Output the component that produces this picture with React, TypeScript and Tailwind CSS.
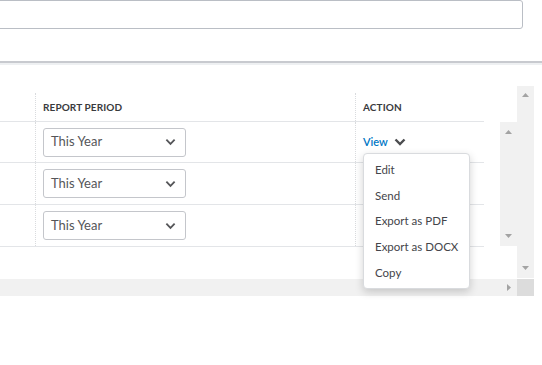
import React from "react";

const rows = ["This Year", "This Year", "This Year"];
const menuItems = ["Edit", "Send", "Export as PDF", "Export as DOCX", "Copy"];

const Chevron: React.FC<{ className?: string; sw?: number }> = ({ className, sw = 2 }) => (
  <svg viewBox="0 0 12 8" className={className} fill="none" stroke="currentColor" strokeWidth={sw}>
    <path d="M1.5 1.5 6 6l4.5-4.5" />
  </svg>
);

const Arrow: React.FC<{ dir: "up" | "down" | "right" }> = ({ dir }) => {
  const d =
    dir === "up" ? "M0 4 3.5 0 7 4Z" : dir === "down" ? "M0 0h7L3.5 4Z" : "M0 0v7l4-3.5Z";
  return (
    <svg width={dir === "right" ? 4 : 7} height={dir === "right" ? 7 : 4} viewBox={dir === "right" ? "0 0 4 7" : "0 0 7 4"}>
      <path d={d} fill="#a3a3a3" />
    </svg>
  );
};

const App: React.FC = () => {
  return (
    <div className="relative w-[542px] h-[365px] overflow-hidden bg-white font-['Lato','Open_Sans',sans-serif] text-[#393a3d]">
      {/* Search box */}
      <div className="ml-[-10px] h-[29px] w-[533px] rounded-[3px] border border-[#babec5]" />

      <div className="mt-[32px] h-[2px] bg-[#c8cacf]" />
      <div className="h-[2px] bg-[#eef0f2]" />

      <div className="flex">
        {/* Grid area */}
        <div className="w-[517px]">
          <div className="h-[28px]" />
          {/* Header */}
          <div className="flex h-[29px] w-[484px] border-b border-[#e3e5e8] text-[10px] font-bold tracking-[0.1px]">
            <div className="w-[36px] border-r border-dotted border-[#d9dbde]" />
            <div className="flex w-[320px] items-center border-r border-dotted border-[#d9dbde] pl-[7px]">REPORT PERIOD</div>
            <div className="flex items-center pl-[7px]">ACTION</div>
          </div>

          <div className="flex">
            <div className="w-[500px]">
              {rows.map((r, i) => (
                <div
                  key={i}
                  className={`flex w-[484px] border-b border-[#e3e5e8] ${i === 0 ? "h-[41px]" : "h-[42px]"}`}
                >
                  <div className="w-[36px] border-r border-dotted border-[#d9dbde]" />
                  <div className="flex w-[320px] items-center border-r border-dotted border-[#d9dbde] pl-[7px]">
                    <div className="flex h-[29px] w-[143px] items-center justify-between rounded-[3px] border border-[#c4c6cb] pl-[7px] pr-[9px] text-[13px] text-[#555659]">
                      <span>{r}</span>
                      <Chevron className="h-[8px] w-[11px] text-[#555659]" />
                    </div>
                  </div>
                  <div className="flex items-center pl-[7px]">
                    {i === 0 && (
                      <span className="flex items-center gap-[6px] text-[11px] font-semibold text-[#0077c5]">
                        View
                        <Chevron className="h-[8px] w-[12px] text-[#4c4d50]" sw={2.4} />
                      </span>
                    )}
                  </div>
                </div>
              ))}
            </div>
            {/* inner vertical scrollbar */}
            <div className="flex h-[124px] w-[17px] flex-col items-center justify-between bg-[#f1f1f1] pb-[8px] pt-[8px]">
              <Arrow dir="up" />
              <Arrow dir="down" />
            </div>
          </div>
          <div className="h-[32px]" />
        </div>

        {/* outer vertical scrollbar */}
        <div className="mt-[21px] flex h-[192px] w-[17px] flex-col items-center justify-between bg-[#f1f1f1] pb-[8px] pt-[7px]">
          <Arrow dir="up" />
          <Arrow dir="down" />
        </div>
      </div>

      {/* horizontal scrollbar */}
      <div className="flex h-[17px] w-[534px]">
        <div className="flex w-[517px] items-center justify-end bg-[#f1f1f1] pr-[6px]">
          <Arrow dir="right" />
        </div>
        <div className="w-[17px] bg-[#dcdcdc]" />
      </div>

      {/* dropdown menu */}
      <div className="absolute left-[363px] top-[153px] w-[107px] rounded-[4px] border border-[#d9dbde] bg-white py-[3px] shadow-[0_3px_8px_rgba(0,0,0,0.18)]">
        {menuItems.map((m) => (
          <div key={m} className="flex h-[25.6px] items-center pl-[11px] text-[11.5px] text-[#44454a]">
            {m}
          </div>
        ))}
      </div>
    </div>
  );
};

export default App;
